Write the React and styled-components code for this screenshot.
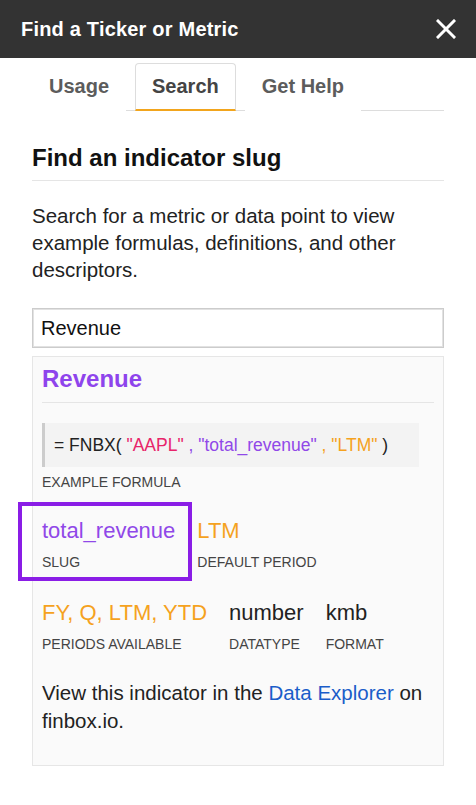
import React, { useState } from 'react';
import styled, { createGlobalStyle } from 'styled-components';

const GlobalStyle = createGlobalStyle`
  body {
    margin: 0;
    background: #fff;
    font-family: "Liberation Sans", Arial, Helvetica, sans-serif;
    color: #222;
  }
`;

const Sidebar = styled.div`
  width: 476px;
  min-height: 805px;
  background: #fff;
`;

const Header = styled.div`
  height: 58px;
  background: #333;
  display: flex;
  align-items: center;
  justify-content: space-between;
  padding: 0 20px 0 21px;
  box-sizing: border-box;
`;

const HeaderTitle = styled.h1`
  margin: 0;
  font-size: 20px;
  font-weight: bold;
  color: #fff;
  letter-spacing: 0.2px;
`;

const CloseButton = styled.button`
  background: none;
  border: none;
  padding: 0;
  width: 20px;
  height: 20px;
  display: flex;
  cursor: pointer;
`;

const Content = styled.div`
  padding: 0 32px;
`;

const TabList = styled.div`
  display: flex;
  gap: 9px;
  margin-top: 5px;
  border-bottom: 1px solid #ddd;
`;

const Tab = styled.button`
  height: 48px;
  padding: 0 16px;
  box-sizing: border-box;
  font-family: inherit;
  font-size: 20px;
  font-weight: bold;
  color: ${p => (p.active ? '#444' : '#5c5c5c')};
  background: #fff;
  border: 1px solid ${p => (p.active ? '#ddd' : 'transparent')};
  border-bottom: 2px solid ${p => (p.active ? '#f2a51d' : 'transparent')};
  border-radius: 4px 4px 0 0;
  margin-bottom: -1px;
  cursor: pointer;
`;

const SectionTitle = styled.h2`
  margin: 33px 0 0;
  font-size: 24px;
  line-height: 28px;
  font-weight: bold;
  color: #111;
  padding-bottom: 8px;
  border-bottom: 1px solid #e5e5e5;
`;

const Intro = styled.p`
  margin: 21px 0 0;
  font-size: 20.5px;
  line-height: 27px;
  color: #222;
`;

const SearchInput = styled.input`
  display: block;
  width: 100%;
  height: 40px;
  box-sizing: border-box;
  margin-top: 25px;
  padding: 0 8px;
  font-family: inherit;
  font-size: 20px;
  color: #111;
  border: 1px solid #ccc;
  box-shadow: inset 0 0 0 1px #e2e2e2;
  outline: none;
`;

const ResultCard = styled.div`
  margin-top: 8px;
  padding: 8px 9px 30px;
  background: #fafafa;
  border: 1px solid #e6e6e6;
`;

const ResultTitle = styled.h3`
  margin: 0;
  font-size: 24px;
  line-height: 28px;
  font-weight: bold;
  color: #8e44ec;
  padding-bottom: 9px;
  border-bottom: 1px solid #e5e5e5;
`;

const Formula = styled.div`
  margin-top: 20px;
  width: 377px;
  height: 44px;
  box-sizing: border-box;
  display: flex;
  align-items: center;
  padding-left: 9px;
  background: #f3f3f3;
  border-left: 3px solid #ccc;
  font-size: 17.5px;
  color: #222;
  white-space: pre;
`;

const Token = styled.span`
  color: ${p => p.color};
`;

const Label = styled.div`
  margin-top: ${p => p.gap || 8}px;
  font-size: 14px;
  line-height: 20px;
  color: #444;
`;

const AttrRow = styled.div`
  display: flex;
  gap: 22px;
  margin-top: ${p => p.gap}px;
`;

const Attr = styled.div`
  position: relative;
`;

const Highlight = styled.div`
  position: absolute;
  left: -24px;
  right: -17px;
  top: -16px;
  bottom: -9px;
  border: 4px solid #8a1de6;
  pointer-events: none;
`;

const AttrValue = styled.div`
  font-size: 22px;
  line-height: 26px;
  color: ${p => p.color || '#222'};
`;

const Footnote = styled.p`
  margin: 25px 0 0;
  font-size: 20.5px;
  line-height: 28px;
  color: #222;
`;

const Link = styled.a`
  color: #1a5dc9;
  text-decoration: none;
`;

const PURPLE = '#9048e8';
const ORANGE = '#f5a21e';
const PINK = '#e8246a';

const tabs = ['Usage', 'Search', 'Get Help'];

export default function App() {
  const [activeTab, setActiveTab] = useState('Search');
  const [query, setQuery] = useState('Revenue');

  return (
    <Sidebar>
      <GlobalStyle />
      <Header>
        <HeaderTitle>Find a Ticker or Metric</HeaderTitle>
        <CloseButton aria-label="Close">
          <svg width="20" height="20" viewBox="0 0 20 20">
            <path d="M2 2 L18 18 M18 2 L2 18" stroke="#fff" strokeWidth="3" strokeLinecap="square" />
          </svg>
        </CloseButton>
      </Header>

      <Content>
        <TabList>
          {tabs.map(tab => (
            <Tab key={tab} active={activeTab === tab} onClick={() => setActiveTab(tab)}>
              {tab}
            </Tab>
          ))}
        </TabList>

        <SectionTitle>Find an indicator slug</SectionTitle>
        <Intro>
          Search for a metric or data point to view example formulas, definitions, and other
          descriptors.
        </Intro>

        <SearchInput value={query} onChange={e => setQuery(e.target.value)} />

        <ResultCard>
          <ResultTitle>Revenue</ResultTitle>

          <Formula>
            {'= FNBX( '}
            <Token color={PINK}>"AAPL"</Token>
            <Token color={PURPLE}>{' , "total_revenue"'}</Token>
            <Token color={ORANGE}>{' , "LTM"'}</Token>
            {' )'}
          </Formula>
          <Label gap={5}>EXAMPLE FORMULA</Label>

          <AttrRow gap={26}>
            <Attr>
              <Highlight />
              <AttrValue color={PURPLE}>total_revenue</AttrValue>
              <Label>SLUG</Label>
            </Attr>
            <Attr>
              <AttrValue color={ORANGE}>LTM</AttrValue>
              <Label>DEFAULT PERIOD</Label>
            </Attr>
          </AttrRow>

          <AttrRow gap={28}>
            <Attr>
              <AttrValue color={ORANGE}>FY, Q, LTM, YTD</AttrValue>
              <Label>PERIODS AVAILABLE</Label>
            </Attr>
            <Attr>
              <AttrValue>number</AttrValue>
              <Label>DATATYPE</Label>
            </Attr>
            <Attr>
              <AttrValue>kmb</AttrValue>
              <Label>FORMAT</Label>
            </Attr>
          </AttrRow>

          <Footnote>
            View this indicator in the <Link href="#">Data Explorer</Link> on finbox.io.
          </Footnote>
        </ResultCard>
      </Content>
    </Sidebar>
  );
}
